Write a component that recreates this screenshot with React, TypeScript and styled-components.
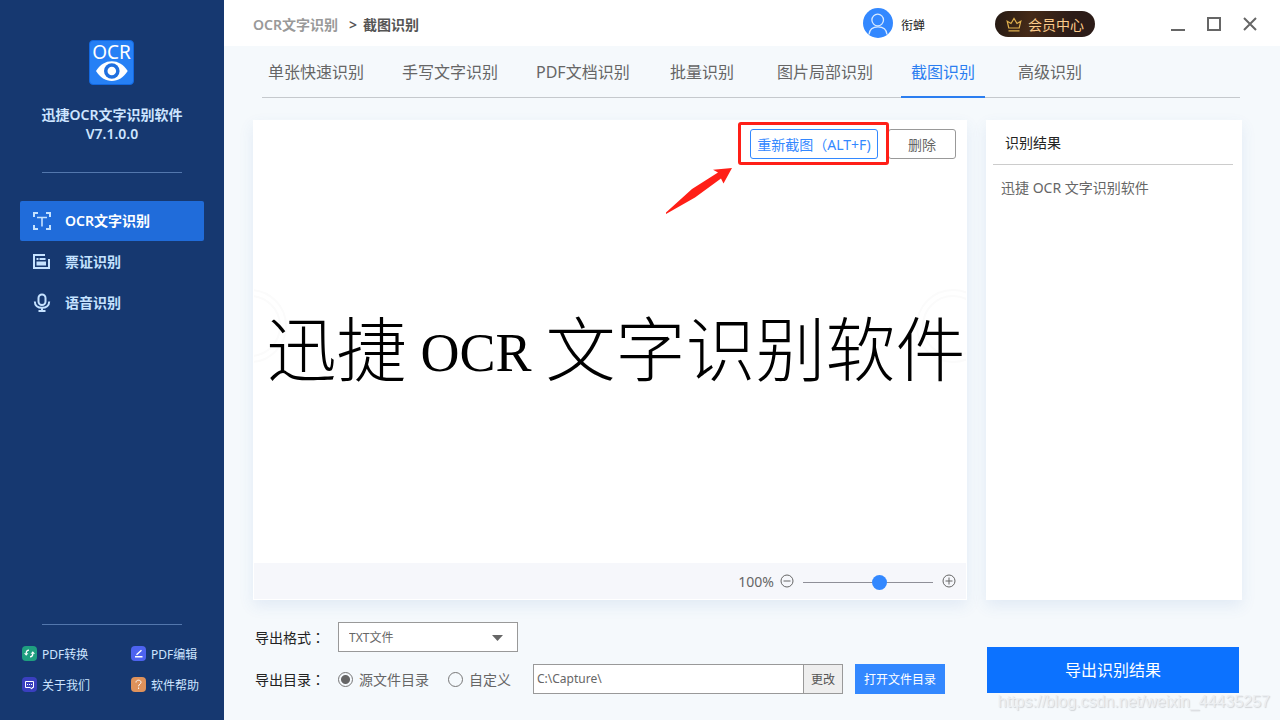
import React, { useState } from "react";
import styled, { createGlobalStyle } from "styled-components";

const GlobalStyle = createGlobalStyle`
  *, *::before, *::after { box-sizing: border-box; }
  body { margin: 0; background: #f5f9fc; }
  body, button, input, select {
    font-family: "Noto Sans", "Noto Sans CJK SC", sans-serif;
  }
  button { padding: 0; border: 0; background: none; cursor: pointer; white-space: nowrap; }
  svg { display: block; flex: none; }
`;

const Page = styled.div`
  position: relative;
  display: flex;
  min-height: 100vh;
`;

/* Sidebar */

const Sidebar = styled.aside`
  flex: none;
  display: flex;
  flex-direction: column;
  width: 224px;
  padding: 40px 20px 20px;
  background: #163870;
`;

const Brand = styled.div`
  display: flex;
  flex-direction: column;
  align-items: center;
  margin-bottom: 29px;
`;

const BrandName = styled.h1`
  margin: 20px 0 0;
  font-size: 14px;
  font-weight: 600;
  line-height: 19px;
  text-align: center;
  color: #cde5ff;
`;

const SidebarRule = styled.hr`
  width: 140px;
  height: 1px;
  margin: 0 auto;
  border: 0;
  background: #5377ad;
`;

const Menu = styled.nav`
  display: flex;
  flex: 1;
  flex-direction: column;
  gap: 1px;
  margin-top: 28px;
`;

const MenuItem = styled.button<{ $active?: boolean }>`
  display: flex;
  align-items: center;
  gap: 14px;
  height: 40px;
  padding: 0 0 2px 12px;
  border-radius: 2px;
  font-size: 14px;
  font-weight: 600;
  color: ${(p) => (p.$active ? "#ffffff" : "#c5e2ff")};
  background: ${(p) => (p.$active ? "#206cda" : "transparent")};
`;

const Links = styled.div`
  display: grid;
  grid-template-columns: 109px 1fr;
  margin-top: 13px;
  padding-left: 2px;
`;

const SideLink = styled.a`
  display: flex;
  align-items: center;
  gap: 5px;
  height: 31px;
  font-size: 12px;
  color: #cde5ff;
  text-decoration: none;
  white-space: nowrap;
`;

/* Main area */

const Main = styled.main`
  display: flex;
  flex: 1;
  flex-direction: column;
  min-width: 0;
`;

const Header = styled.header`
  display: flex;
  align-items: center;
  height: 46px;
  padding: 0 22px 0 29px;
  background: #ffffff;
`;

const Breadcrumb = styled.div`
  display: flex;
  flex: 1;
  align-items: center;
  gap: 6px;
  padding-top: 2px;
  font-size: 14px;
  font-weight: 600;
  color: #555555;
`;

const Parent = styled.a`
  margin-right: 5px;
  color: #999999;
  text-decoration: none;
`;

const User = styled.button`
  display: flex;
  align-items: center;
  gap: 8px;
  width: 132px;
  font-size: 12px;
  color: #222222;
`;

const UserName = styled.span`
  padding-top: 4px;
`;

const Vip = styled.button`
  display: flex;
  align-items: center;
  gap: 6px;
  width: 100px;
  height: 26px;
  padding-left: 11px;
  margin: 2px 75px 0 0;
  border-radius: 13px;
  font-size: 14px;
  color: #fccb8a;
  background: linear-gradient(100deg, #251a14 0%, #452a17 35%, #2c1c18 75%);
`;

const WindowControls = styled.div`
  display: flex;
  gap: 20px;
  padding-top: 2px;
`;

const WindowButton = styled.button`
  width: 16px;
  height: 16px;
`;

const Tabs = styled.nav`
  display: grid;
  grid-template-columns: 134px 134px 134px 107px 134px 107px 107px;
  height: 52px;
  margin: 0 40px 0 38px;
  border-bottom: 1px solid #c5c9cd;
`;

const Tab = styled.button<{ $active?: boolean }>`
  justify-self: start;
  height: 52px;
  padding: 0 10px;
  margin-left: -4px;
  border-bottom: 2px solid ${(p) => (p.$active ? "#2b7ef0" : "transparent")};
  font-size: 16px;
  color: ${(p) => (p.$active ? "#2b7ef0" : "#666666")};
`;

const Workspace = styled.section`
  display: flex;
  flex: 1;
  gap: 19px;
  margin: 22px 38px 0 29px;
`;

const Preview = styled.div`
  display: flex;
  flex: 1;
  flex-direction: column;
  min-width: 0;
  border: 1px solid #ffffff;
  background: #ffffff;
  box-shadow: 0 6px 14px rgba(60, 110, 190, 0.1);
`;

const Toolbar = styled.div`
  display: flex;
  justify-content: flex-end;
  gap: 10px;
  padding: 8px 10px 0;
`;

const ToolButton = styled.button<{ $primary?: boolean }>`
  width: ${(p) => (p.$primary ? 128 : 68)}px;
  height: 30px;
  padding-bottom: 1px;
  border: 1px solid ${(p) => (p.$primary ? "#3388ff" : "#999999")};
  border-radius: 3px;
  font-size: 14px;
  color: ${(p) => (p.$primary ? "#3388ff" : "#666666")};
`;

const Highlight = styled.div`
  position: relative;
  z-index: 1;

  &::after {
    content: "";
    position: absolute;
    inset: -7px -11px -6px -12px;
    border: 3px solid #ff1f17;
    border-radius: 3px;
    pointer-events: none;
  }
`;

const Pointer = styled.svg`
  position: absolute;
  top: 38px;
  right: 145px;
`;

const Stage = styled.div`
  position: relative;
  display: flex;
  flex: 1;
  align-items: center;
  justify-content: center;
  overflow: hidden;
`;

const Captured = styled.div`
  position: relative;
  display: flex;
  align-items: center;
  gap: 14px;
  padding: 0 0 24px 12px;
  font-size: 70px;
  font-weight: 300;
  line-height: 80px;
  white-space: nowrap;
  color: #000000;
`;

const CapturedLatin = styled.span`
  padding-top: 7px;
  font-family: "Liberation Serif", serif;
  font-size: 54px;
  font-weight: 400;
`;

const Pager = styled.button<{ $side: "left" | "right" }>`
  position: absolute;
  top: 130px;
  ${(p) => p.$side}: ${(p) => (p.$side === "left" ? -41 : -24)}px;
`;

const ZoomBar = styled.div`
  display: flex;
  align-items: center;
  justify-content: flex-end;
  height: 36px;
  padding-right: 10px;
  font-size: 14px;
  color: #666666;
  background: #f6f7fb;
`;

const ZoomButton = styled.button`
  margin-left: 6px;
`;

const ZoomSlider = styled.input`
  appearance: none;
  width: 130px;
  height: 16px;
  margin: 2px 3px 0 9px;
  background: transparent;

  &::-webkit-slider-runnable-track {
    height: 1px;
    background: #8f8f98;
  }

  &::-webkit-slider-thumb {
    appearance: none;
    width: 15px;
    height: 15px;
    margin-top: -7px;
    border-radius: 50%;
    background: #3388ff;
  }
`;

const Result = styled.div`
  flex: none;
  width: 256px;
  padding: 0 9px 0 7px;
  background: #ffffff;
  box-shadow: 0 6px 14px rgba(60, 110, 190, 0.1);
`;

const ResultTitle = styled.h2`
  height: 45px;
  margin: 0;
  padding: 2px 12px 0;
  border-bottom: 1px solid #cccccc;
  font-size: 14px;
  font-weight: 400;
  line-height: 42px;
  color: #222222;
`;

const ResultText = styled.p`
  margin: 12px 8px;
  font-size: 14px;
  line-height: 22px;
  color: #666666;
`;

/* Export options */

const Footer = styled.footer`
  display: flex;
  align-items: flex-start;
  justify-content: space-between;
  height: 120px;
  padding: 22px 41px 26px 31px;
`;

const Options = styled.form`
  display: grid;
  gap: 12px;
`;

const OptionRow = styled.div`
  display: flex;
  align-items: center;
  height: 30px;
  font-size: 14px;
  color: #666666;
`;

const Label = styled.label`
  width: 83px;
  color: #222222;
`;

/* The Traditional Chinese face centres the full-width colon in its cell. */
const Colon = styled.span`
  font-family: "Noto Sans CJK TC", sans-serif;
`;

const SelectBox = styled.div`
  position: relative;
`;

const Select = styled.select`
  appearance: none;
  display: block;
  width: 180px;
  height: 30px;
  padding: 0 10px;
  border: 1px solid #999999;
  border-radius: 0;
  font-size: 12px;
  color: #666666;
  background: #ffffff;
`;

const Caret = styled.svg`
  position: absolute;
  top: 13px;
  right: 15px;
  pointer-events: none;
`;

const Choice = styled.label`
  display: flex;
  align-items: center;
  gap: 6px;
  margin-right: 19px;
`;

const Radio = styled.input`
  appearance: none;
  width: 15px;
  height: 15px;
  margin: 0;
  border: 1px solid #777777;
  border-radius: 50%;

  &:checked {
    background: radial-gradient(circle, #666666 0 4px, transparent 5px);
  }
`;

const PathInput = styled.input`
  width: 271px;
  height: 30px;
  margin-left: 3px;
  padding: 0 3px 1px;
  border: 1px solid #999999;
  font-size: 12px;
  color: #666666;
  background: #ffffff;
`;

const ChangeButton = styled.button`
  width: 40px;
  height: 30px;
  margin-left: -1px;
  border: 1px solid #999999;
  font-size: 12px;
  color: #555555;
  background: #eeeeee;
`;

const OpenButton = styled.button`
  width: 90px;
  height: 30px;
  margin-left: 12px;
  font-size: 12px;
  color: #ffffff;
  background: #3388ff;
`;

const ExportButton = styled.button`
  width: 252px;
  height: 46px;
  margin-top: 25px;
  padding-bottom: 2px;
  font-size: 16px;
  color: #ffffff;
  background: #0c72ff;
`;

const Watermark = styled.div`
  position: absolute;
  right: 10px;
  bottom: 8px;
  font-family: "Liberation Sans", sans-serif;
  font-size: 16px;
  line-height: 20px;
  color: #eceff2;
  text-shadow: 1px 1px 1px #d0d3d6;
  pointer-events: none;
`;

/* Drawings */

const Logo = () => (
  <svg width="46" height="45" viewBox="0 0 46 45" role="img" aria-label="OCR">
    <rect x="0.5" y="0.5" width="44" height="44" rx="3.5" fill="#2680f5" stroke="#1268e0" />
    <text x="22.5" y="18.5" textAnchor="middle" fontSize="19" fill="#fff" fontFamily="Noto Sans">
      OCR
    </text>
    <path d="M7 31C11 24.500 16.500 21.200 22.800 21.200S34.600 24.500 38.700 31C34.600 37.500 29 41 22.800 41S11 37.500 7 31Z" fill="#fff" />
    <circle cx="22.800" cy="31" r="7.800" fill="#1f6fe0" />
    <circle cx="22.800" cy="31" r="4.300" fill="#fff" />
  </svg>
);

const ScanTextIcon = () => (
  <svg width="19" height="19" viewBox="0 0 19 19" fill="none" stroke="#c5e2ff" strokeWidth="2">
    <path d="M2 6V2H6M14 2H18V6M18 14V18H14M6 18H2V14" />
    <path d="M5 6.500H15M10 6.500V15.500" strokeWidth="1.600" />
  </svg>
);

const TicketIcon = () => (
  <svg width="19" height="19" viewBox="0 0 19 19" fill="none" stroke="#c5e2ff">
    <path d="M13 3H2V16H17V7" strokeWidth="2" />
    <path d="M4.500 7H6.500M7.500 7H13.500" strokeWidth="2" />
    <rect x="4.500" y="9.500" width="9.500" height="4" fill="#c5e2ff" stroke="none" />
  </svg>
);

const MicIcon = () => (
  <svg width="19" height="19" viewBox="0 0 19 19" fill="none" stroke="#c5e2ff" strokeWidth="2">
    <rect x="6.500" y="1.500" width="7" height="10.500" rx="3.500" />
    <path d="M2.800 8.500C2.800 12.500 5.800 14.800 10 14.800S17.200 12.500 17.200 8.500M10 15V18M6.500 18H13.500" />
  </svg>
);

const Badge = ({ color, children }: { color: string; children: React.ReactNode }) => (
  <svg width="15" height="15" viewBox="0 0 15 15" fill="none" stroke="#fff" strokeWidth="1">
    <rect width="15" height="15" rx="4" fill={color} stroke="none" />
    {children}
  </svg>
);

const links = [
  {
    name: "PDF转换",
    color: "#1f9f80",
    art: (
      <>
        <path d="M7 4.200C5 4.200 4.200 5.500 4.200 7.500M8 10.800C10 10.800 10.800 9.500 10.800 7.500" strokeWidth="1.300" />
        <path d="M2 7.200H6.400L4.200 9.800ZM8.600 7.800H13L10.800 5.200Z" fill="#fff" stroke="none" />
      </>
    ),
  },
  { name: "PDF编辑", color: "#4d63f0", art: <path d="M4 10.700H11.500M5.500 8.800L10.500 4.200" strokeWidth="1.400" /> },
  {
    name: "关于我们",
    color: "#3a3fbf",
    art: (
      <>
        <path d="M3.500 4.500H11.500V10.500H10V12L8 10.500H3.500Z" />
        <path d="M5 7.500H6M7 7.500H8M9 7.500H10" />
      </>
    ),
  },
  {
    name: "软件帮助",
    color: "#df925b",
    art: <path d="M5 5.500C5 4 6 3.200 7.500 3.200S10 4 10 5.400C10 7 7.600 7.200 7.600 9.300M7.600 10.500V12" />,
  },
];

const Avatar = () => (
  <svg width="30" height="30" viewBox="0 0 30 30" fill="none" stroke="#d9eaff" strokeWidth="1.300">
    <circle cx="15" cy="15" r="15" fill="#3388ff" stroke="none" />
    <circle cx="14.700" cy="12" r="5.800" />
    <path d="M6 26.500C6.500 21.500 10 18.900 15 18.900S23.500 21.500 24 26.500" />
  </svg>
);

const Crown = () => (
  <svg width="16" height="15" viewBox="0 0 16 15" fill="none" stroke="#dfb04d" strokeWidth="1.200">
    <path d="M2.800 11L1.200 4.200L5 6.500L8 1.500L11 6.500L14.800 4.200L13.200 11ZM2.500 13.800H13.500" />
  </svg>
);

const ZoomGlyph = ({ plus }: { plus?: boolean }) => (
  <svg width="14" height="14" viewBox="0 0 14 14" fill="none" stroke="#666">
    <circle cx="7" cy="7" r="6" />
    <path d={plus ? "M3.500 7H10.500M7 3.500V10.500" : "M3.500 7H10.500"} />
  </svg>
);

const Rings = () => (
  <svg width="74" height="74" viewBox="0 0 74 74" fill="none" stroke="#fbfbfb" strokeWidth="2">
    <circle cx="37" cy="37" r="36" />
    <circle cx="37" cy="37" r="30" />
  </svg>
);

const menu = [
  { name: "OCR文字识别", icon: <ScanTextIcon /> },
  { name: "票证识别", icon: <TicketIcon /> },
  { name: "语音识别", icon: <MicIcon /> },
];

const tabs = ["单张快速识别", "手写文字识别", "PDF文档识别", "批量识别", "图片局部识别", "截图识别", "高级识别"];

export default function App() {
  const [section, setSection] = useState(menu[0].name);
  const [tab, setTab] = useState("截图识别");

  return (
    <Page>
      <GlobalStyle />
      <Sidebar>
        <Brand>
          <Logo />
          <BrandName>
            迅捷OCR文字识别软件
            <br />
            V7.1.0.0
          </BrandName>
        </Brand>
        <SidebarRule />
        <Menu>
          {menu.map((m) => (
            <MenuItem key={m.name} $active={m.name === section} onClick={() => setSection(m.name)}>
              {m.icon}
              {m.name}
            </MenuItem>
          ))}
        </Menu>
        <SidebarRule />
        <Links>
          {links.map((l) => (
            <SideLink key={l.name} href="#">
              <Badge color={l.color}>{l.art}</Badge>
              {l.name}
            </SideLink>
          ))}
        </Links>
      </Sidebar>

      <Main>
        <Header>
          <Breadcrumb>
            <Parent href="#">OCR文字识别</Parent>
            <span>&gt;</span>
            <span>截图识别</span>
          </Breadcrumb>
          <User>
            <Avatar />
            <UserName>衔蝉</UserName>
          </User>
          <Vip>
            <Crown />
            会员中心
          </Vip>
          <WindowControls>
            <WindowButton aria-label="最小化">
              <svg width="16" height="16">
                <path d="M1 14H15" stroke="#666" strokeWidth="2" />
              </svg>
            </WindowButton>
            <WindowButton aria-label="最大化">
              <svg width="16" height="16">
                <rect x="2" y="2" width="12" height="12" fill="none" stroke="#666" strokeWidth="2" />
              </svg>
            </WindowButton>
            <WindowButton aria-label="关闭">
              <svg width="16" height="16">
                <path d="M2 2L14 14M14 2L2 14" stroke="#666" strokeWidth="2" />
              </svg>
            </WindowButton>
          </WindowControls>
        </Header>

        <Tabs>
          {tabs.map((t) => (
            <Tab key={t} $active={t === tab} onClick={() => setTab(t)}>
              {t}
            </Tab>
          ))}
        </Tabs>

        <Workspace>
          <Preview>
            <Toolbar>
              <Highlight>
                <ToolButton $primary>重新截图（ALT+F)</ToolButton>
                <Pointer width="68" height="48" viewBox="0 0 68 48">
                  <path d="M67 1L48 2.800L53 5.500L27 22L1 45.500V47L30 30.500L56 11.500L58.500 16.500Z" fill="#ff1f17" />
                </Pointer>
              </Highlight>
              <ToolButton>删除</ToolButton>
            </Toolbar>
            <Stage>
              <Pager $side="left" aria-label="上一张">
                <Rings />
              </Pager>
              <Pager $side="right" aria-label="下一张">
                <Rings />
              </Pager>
              <Captured>
                <span>迅捷</span>
                <CapturedLatin>OCR</CapturedLatin>
                <span>文字识别软件</span>
              </Captured>
            </Stage>
            <ZoomBar>
              <span>100%</span>
              <ZoomButton aria-label="缩小">
                <ZoomGlyph />
              </ZoomButton>
              <ZoomSlider type="range" aria-label="缩放" defaultValue={60} />
              <ZoomButton aria-label="放大">
                <ZoomGlyph plus />
              </ZoomButton>
            </ZoomBar>
          </Preview>
          <Result>
            <ResultTitle>识别结果</ResultTitle>
            <ResultText>迅捷 OCR 文字识别软件</ResultText>
          </Result>
        </Workspace>

        <Footer>
          <Options>
            <OptionRow>
              <Label htmlFor="format">
                导出格式<Colon>：</Colon>
              </Label>
              <SelectBox>
                <Select id="format">
                  <option>TXT文件</option>
                </Select>
                <Caret width="11" height="6" viewBox="0 0 11 6">
                  <path d="M0 0H11L5.500 6Z" fill="#666" />
                </Caret>
              </SelectBox>
            </OptionRow>
            <OptionRow>
              <Label htmlFor="path">
                导出目录<Colon>：</Colon>
              </Label>
              <Choice>
                <Radio type="radio" name="target" defaultChecked />
                源文件目录
              </Choice>
              <Choice>
                <Radio type="radio" name="target" />
                自定义
              </Choice>
              <PathInput id="path" defaultValue="C:\Capture\" />
              <ChangeButton type="button">更改</ChangeButton>
              <OpenButton type="button">打开文件目录</OpenButton>
            </OptionRow>
          </Options>
          <ExportButton>导出识别结果</ExportButton>
        </Footer>
      </Main>
      <Watermark>https://blog.csdn.net/weixin_44435257</Watermark>
    </Page>
  );
}
